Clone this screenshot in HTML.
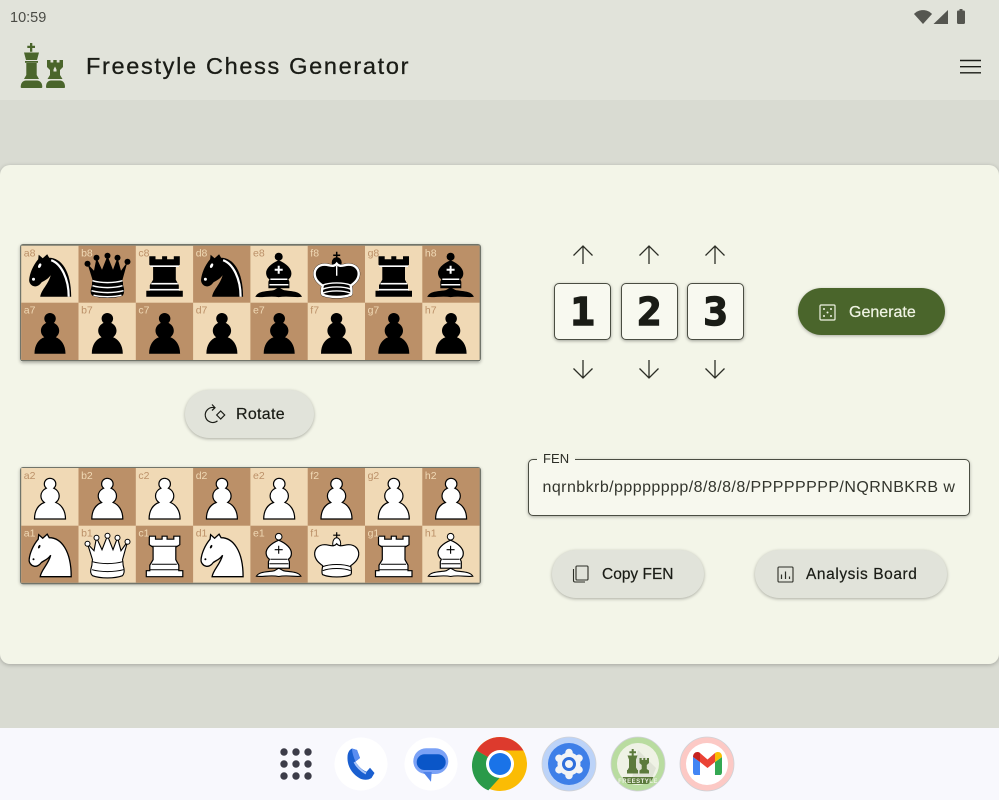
<!DOCTYPE html>
<html><head><meta charset="utf-8"><style>
html,body{margin:0;padding:0;width:999px;height:800px;overflow:hidden;background:#d9dbd2;font-family:"Liberation Sans",sans-serif}
.a{position:absolute}
#top{left:0;top:0;width:999px;height:100px;background:#e1e3da}
#card{left:0;top:165px;width:999px;height:499px;background:#f3f5e8;border-radius:10px;box-shadow:0 1px 4px rgba(0,0,0,.25)}
#nav{left:0;top:728px;width:999px;height:72px;background:#f8f8fd}
.t{white-space:nowrap;line-height:1}
.m{-webkit-text-stroke:.2px currentColor}
.btn{background:#e1e3da;border-radius:24px;box-shadow:0 1px 3px rgba(0,0,0,.3)}
.box{width:55px;height:55px;background:#f8f9f0;border:1px solid #4a4d42;border-radius:5px;box-shadow:0 1px 3px rgba(0,0,0,.35);text-align:center;font:bold 38px/57px "DejaVu Sans Mono","Liberation Mono",monospace;color:#1a1c16;-webkit-text-stroke:1.6px #1a1c16}
.box span{display:inline-block;transform:scaleX(1.06)}
svg{position:absolute;overflow:visible}
.board{box-shadow:0 1px 3px rgba(0,0,0,.3)}
</style></head><body>
<div class="a" id="top"></div>
<div class="a" id="card"></div>
<div class="a" id="nav"></div>

<svg width="0" height="0" style="left:0;top:0"><defs>
<path id="pw" d="M28.700 10.300c-3.100 0-5.600 2.500-5.600 5.600 0 1.700.8 3.300 2 4.300-3.100 1.400-5.400 4.300-5.400 7.700 0 2.700 1.300 5 3.400 6.600C17.500 36.500 13.300 42 13.300 51H44.300C44.300 42 39.800 36.500 34.600 34.500c2.100-1.600 3.400-3.900 3.400-6.600 0-3.400-2.300-6.300-5.400-7.700 1.200-1 2-2.600 2-4.300 0-3.100-2.500-5.600-5.900-5.600z"/>
<path id="kn" d="M19 51C20 44 27 39 29.500 29.500 26 34.500 22 35 20 37 18 40 15 41 13 40.500 10 40 7.500 37 8 33.500 8.500 28 11.500 20 17 13.500L17.500 9 21.500 12.500 26 8.500 28 12C40 12 50 25 50 51Z"/>
<path id="rk" d="M13.500 10.500H19.700V13.500H26.300V10.500H31.300V13.500H38V10.500H44V19L40 21.500V34L43 39.500V45H47V51H10.500V45H14V39.500L17.300 34V21.500L13.500 19Z"/>
<path id="qn" d="M14 34 9 18 15.500 25 18 12 23.500 24 29 10 34.500 24 39 12 42.500 25 49 16 44 34C45 38 44 38 45 41 46.500 46 45 49 44 50 36 53 22 53 14 50 12 48 11.500 46 13 41 14 38 13 38 14 34Z"/>
<path id="kg" d="M29 18C26 22 22 19 17 19 10 19 6.500 24 7 29 7.500 34 11 37 15 40 14 45 14 48 15 49 22 52 36 52 43 49 44 48 44 45 43 40 47 37 50.500 34 51 29 51.500 24 48 19 41 19 36 19 32 22 29 18Z"/>
<path id="bsb" d="M28.300 14.500C20 18 15.500 23 15.700 27.500 16 31 17.500 32.500 19 33.500L18 36V42.500H39V36L38 33.500C39.500 32.500 41 31 41 27.500 41 23 36.500 18 28.300 14.500Z"/>
<path id="bsf" d="M6 50.500C9 45.500 18 46.500 24 45L28.300 42.500 33 45C39 46.500 47.500 45.500 50.500 50.500 45 51.500 37 49 28.300 50.800 20 49 12 51.500 6 50.500Z"/>

<g id="bP"><use href="#pw" fill="#000"/></g>
<g id="wP"><use href="#pw" fill="#fff" stroke="#000" stroke-width="1.200"/></g>
<g id="bN"><use href="#kn" fill="#000"/><path d="M47.500 51C47.500 33 40 18 30 14.500" fill="none" stroke="#fff" stroke-width="2.200"/><ellipse cx="18.500" cy="20" rx="1.400" ry="2.400" fill="#fff" transform="rotate(25 18.500 20)"/><circle cx="12.300" cy="33.500" r="1.500" fill="#fff"/></g>
<g id="wN"><use href="#kn" fill="#fff" stroke="#000" stroke-width="1.300"/><ellipse cx="18" cy="21" rx="1" ry="1.900" fill="#000" transform="rotate(25 18 21)"/><circle cx="12.300" cy="33.500" r="1" fill="#000"/></g>
<g id="bR"><use href="#rk" fill="#000"/><path d="M14.500 20.500H43M15.500 38H42M13.500 44H44" stroke="#fff" stroke-width="1.600" fill="none"/></g>
<g id="wR"><use href="#rk" fill="#fff" stroke="#000" stroke-width="1.200"/><path d="M15 20.500H42M16 38.500H41M14 44H43" stroke="#000" stroke-width="1" fill="none"/></g>
<g id="bQ"><use href="#qn" fill="#000"/><g fill="#000"><circle cx="9" cy="18" r="3"/><circle cx="18" cy="12" r="3"/><circle cx="29" cy="10" r="3"/><circle cx="39" cy="12" r="3"/><circle cx="49" cy="16" r="3"/></g><path d="M14 35C22 37.500 36 37.500 44 35M14 40C22 42.500 36 42.500 44 40M13 45C22 47.500 36 47.500 45 45M15 49.500C22 51.500 36 51.500 43 49.500" fill="none" stroke="#fff" stroke-width="1.500"/></g>
<g id="wQ"><use href="#qn" fill="#fff" stroke="#000" stroke-width="1.100"/><g fill="#fff" stroke="#000" stroke-width="1"><circle cx="9" cy="18" r="2.500"/><circle cx="18" cy="12" r="2.500"/><circle cx="29" cy="10" r="2.500"/><circle cx="39" cy="12" r="2.500"/><circle cx="49" cy="16" r="2.500"/></g><path d="M14 36C22 38.500 36 38.500 44 36M13.500 44C22 46.500 36 46.500 45 44" fill="none" stroke="#000" stroke-width="1"/></g>
<g id="bK"><path d="M29 6V13M25.500 9.500H32.500" stroke="#000" stroke-width="1.500"/><ellipse cx="29" cy="17" rx="5" ry="5.500" fill="#000"/><use href="#kg" fill="#000" stroke="#000" stroke-width="3"/><use href="#kg" fill="#000" stroke="#fff" stroke-width="2.400"/><path d="M29 20 29 30M15 39.500C22 36.500 36 36.500 43 39.500M15 43.500C22 40.500 36 40.500 43 43.500M15 47.500C22 44.500 36 44.500 43 47.500" fill="none" stroke="#fff" stroke-width="1.400"/></g>
<g id="wK"><path d="M29 6.500V13M25.500 9.500H32.500" stroke="#000" stroke-width="1.200"/><ellipse cx="29" cy="18" rx="4" ry="6" fill="#fff" stroke="#000"/><use href="#kg" fill="#fff" stroke="#000" stroke-width="1.200"/><path d="M15 41C22 38 36 38 43 41M15 45C22 42 36 42 43 45" fill="none" stroke="#000" stroke-width="1"/></g>
<g id="bB"><circle cx="28.300" cy="11" r="4" fill="#000"/><use href="#bsb" fill="#000"/><use href="#bsf" fill="#000" stroke="#000" stroke-width="1.400"/><path d="M28.300 20V28M24.300 24H32.300" stroke="#fff" stroke-width="2"/><path d="M20 33.500H37M19 39H38" stroke="#fff" stroke-width="1.500"/></g>
<g id="wB"><circle cx="28.300" cy="11" r="3.300" fill="#fff" stroke="#000"/><use href="#bsb" fill="#fff" stroke="#000" stroke-width="1.200"/><use href="#bsf" fill="#fff" stroke="#000" stroke-width="1.100"/><path d="M28.300 20V28M24.300 24H32.300" stroke="#000" stroke-width="1.100"/><path d="M20 33.500H37M19 38H38" stroke="#000" stroke-width="1"/></g>
</defs></svg>

<!-- status bar -->
<div class="a t" style="left:10px;top:11px;font-size:14.500px;color:#4a4b45">10:59</div>
<svg style="left:912px;top:8px" width="56" height="18" viewBox="0 0 56 18"><path d="M2 6C6.500 .8 15.500 .8 20 6L11 16Z" fill="#555650"/><path d="M36 2V16H21.500Z" fill="#555650"/><rect x="45" y="2.500" width="8" height="13.500" rx="1.200" fill="#555650"/><rect x="47.500" y="1" width="3" height="2" fill="#555650"/></svg>

<!-- logo -->
<svg style="left:0;top:0" width="100" height="100" viewBox="0 0 100 100" fill="#4a652b">
<path d="M30 43h2.300v2.700H35V48h-2.700v3.800H30V48h-2.700v-2.300H30z"/>
<path d="M24 52.500H39L37 60H26Z"/>
<path d="M25 61H38V62.800H25Z"/>
<path d="M26.300 63H36.700V75L39 79H24L26.300 75Z"/>
<path d="M20.700 87C20.700 83 23 80.500 26 80.500H37C40 80.500 42.300 83 42.300 87 42.300 87.700 41.800 88 41 88H22C21.200 88 20.700 87.700 20.700 87Z"/>
<path d="M47 60H50.500V62.500H53.300V60H56.700V62.500H59.500V60H63V67L60 70V75L62.500 79H47.500L50 75V70L47 67Z"/>
<path d="M53.500 69.500 55 66.500 56.500 69.500V71.500H53.500Z" fill="#e1e3da"/>
<path d="M46 87C46 83 48 80.500 51 80.500H60C63 80.500 65 83 65 87 65 87.700 64.500 88 64 88H47C46.500 88 46 87.700 46 87Z"/>
</svg>
<div class="a t" style="left:86px;top:55px;font-size:23.500px;letter-spacing:1.680px;color:#1a1c16;-webkit-text-stroke:.3px #1a1c16">Freestyle Chess Generator</div>
<svg style="left:960px;top:58px" width="21" height="17"><path d="M0 2.500H21M0 8.700H21M0 14.800H21" stroke="#1a1c16" stroke-width="1.400"/></svg>

<!-- top board -->
<svg class="board" style="left:19.500px;top:244px;border-radius:3px" width="461" height="117.500" viewBox="0 0 461 117.500">
<rect width="461" height="117.500" rx="3" fill="#70746a"/>
<g transform="translate(1.200 1.700)">
<rect width="458.400" height="114.300" fill="#f0d9b5"/>
<g fill="#bb9068"><rect x="57.300" width="57.300" height="57"/><rect x="171.900" width="57.300" height="57"/><rect x="286.500" width="57.300" height="57"/><rect x="401.100" width="57.300" height="57"/><rect y="57" width="57.300" height="57.300"/><rect x="114.600" y="57" width="57.300" height="57.300"/><rect x="229.200" y="57" width="57.300" height="57.300"/><rect x="343.800" y="57" width="57.300" height="57.300"/></g>
<use href="#bN"/><use href="#bQ" x="57.300"/><use href="#bR" x="114.600"/><use href="#bN" x="171.900"/><use href="#bB" x="229.200"/><use href="#bK" x="286.500"/><use href="#bR" x="343.800"/><use href="#bB" x="401.100"/>
<use href="#bP" y="57"/><use href="#bP" x="57.300" y="57"/><use href="#bP" x="114.600" y="57"/><use href="#bP" x="171.900" y="57"/><use href="#bP" x="229.200" y="57"/><use href="#bP" x="286.500" y="57"/><use href="#bP" x="343.800" y="57"/><use href="#bP" x="401.100" y="57"/>
<g font-family="Liberation Sans" font-size="10.500">
<g fill="#bb9068"><text x="2.600" y="11">a8</text><text x="117.200" y="11">c8</text><text x="231.800" y="11">e8</text><text x="346.400" y="11">g8</text><text x="59.900" y="68">b7</text><text x="174.500" y="68">d7</text><text x="289.100" y="68">f7</text><text x="403.700" y="68">h7</text></g>
<g fill="#f0d9b5"><text x="59.900" y="11">b8</text><text x="174.500" y="11">d8</text><text x="289.100" y="11">f8</text><text x="403.700" y="11">h8</text><text x="2.600" y="68">a7</text><text x="117.200" y="68">c7</text><text x="231.800" y="68">e7</text><text x="346.400" y="68">g7</text></g>
</g></g></svg>

<!-- bottom board -->
<svg class="board" style="left:19.500px;top:467px;border-radius:3px" width="461" height="117.300" viewBox="0 0 461 117.300">
<rect width="461" height="117.300" rx="3" fill="#70746a"/>
<g transform="translate(1.200 1)">
<rect width="458.400" height="114.700" fill="#f0d9b5"/>
<g fill="#bb9068"><rect x="57.300" width="57.300" height="57.700"/><rect x="171.900" width="57.300" height="57.700"/><rect x="286.500" width="57.300" height="57.700"/><rect x="401.100" width="57.300" height="57.700"/><rect y="57.700" width="57.300" height="57"/><rect x="114.600" y="57.700" width="57.300" height="57"/><rect x="229.200" y="57.700" width="57.300" height="57"/><rect x="343.800" y="57.700" width="57.300" height="57"/></g>
<use href="#wP"/><use href="#wP" x="57.300"/><use href="#wP" x="114.600"/><use href="#wP" x="171.900"/><use href="#wP" x="229.200"/><use href="#wP" x="286.500"/><use href="#wP" x="343.800"/><use href="#wP" x="401.100"/>
<use href="#wN" y="57.700"/><use href="#wQ" x="57.300" y="57.700"/><use href="#wR" x="114.600" y="57.700"/><use href="#wN" x="171.900" y="57.700"/><use href="#wB" x="229.200" y="57.700"/><use href="#wK" x="286.500" y="57.700"/><use href="#wR" x="343.800" y="57.700"/><use href="#wB" x="401.100" y="57.700"/>
<g font-family="Liberation Sans" font-size="10.500">
<g fill="#bb9068"><text x="2.600" y="11">a2</text><text x="117.200" y="11">c2</text><text x="231.800" y="11">e2</text><text x="346.400" y="11">g2</text><text x="59.900" y="68.700">b1</text><text x="174.500" y="68.700">d1</text><text x="289.100" y="68.700">f1</text><text x="403.700" y="68.700">h1</text></g>
<g fill="#f0d9b5"><text x="59.900" y="11">b2</text><text x="174.500" y="11">d2</text><text x="289.100" y="11">f2</text><text x="403.700" y="11">h2</text><text x="2.600" y="68.700">a1</text><text x="117.200" y="68.700">c1</text><text x="231.800" y="68.700">e1</text><text x="346.400" y="68.700">g1</text></g>
</g></g></svg>

<!-- rotate -->
<div class="a btn" style="left:185px;top:390px;width:129px;height:48px"></div>
<svg style="left:204px;top:403px" width="22" height="22" fill="none" stroke="#1a1c16" stroke-width="1.200"><path d="M10.500 4.700A7.500 7.500 0 1 0 13.500 17.800"/><path d="M8 1.500 11 4.700 8 7.500"/><path d="M16.700 8 20.700 12 16.700 16 12.700 12Z"/></svg>
<div class="a t m" style="left:236px;top:407px;font-size:16px;letter-spacing:.3px;color:#1a1c16">Rotate</div>

<!-- arrows -->
<svg style="left:570px;top:243px" width="160" height="137" fill="none" stroke="#2c2e26" stroke-width="1.300">
<path d="M13 3V21M3.500 12.500 13 3 22.500 12.500"/><path d="M13 117V135M3.500 125.500 13 135 22.500 125.500"/>
<g transform="translate(66 0)"><path d="M13 3V21M3.500 12.500 13 3 22.500 12.500"/><path d="M13 117V135M3.500 125.500 13 135 22.500 125.500"/></g>
<g transform="translate(132 0)"><path d="M13 3V21M3.500 12.500 13 3 22.500 12.500"/><path d="M13 117V135M3.500 125.500 13 135 22.500 125.500"/></g>
</svg>
<div class="a box" style="left:554px;top:283px"><span>1</span></div>
<div class="a box" style="left:620.500px;top:283px"><span>2</span></div>
<div class="a box" style="left:687px;top:283px"><span>3</span></div>

<!-- generate -->
<div class="a btn" style="left:798px;top:288px;width:147px;height:47px;background:#4a652b"></div>
<svg style="left:819px;top:304px" width="17" height="17" fill="#f0f4e4"><rect x="1" y="1" width="15" height="15" rx="1" fill="none" stroke="#f0f4e4" stroke-width="1.200"/><circle cx="5" cy="5" r="1"/><circle cx="12" cy="5" r="1"/><circle cx="8.500" cy="8.500" r="1"/><circle cx="5" cy="12" r="1"/><circle cx="12" cy="12" r="1"/></svg>
<div class="a t m" style="left:849px;top:305px;font-size:16px;color:#f0f4e4">Generate</div>

<!-- FEN -->
<div class="a" style="left:528px;top:459px;width:440px;height:55px;background:#f7f8ee;border:1px solid #4a4d42;border-radius:5px;box-shadow:0 1px 3px rgba(0,0,0,.3)"></div>
<div class="a t" style="left:537px;top:452px;padding:0 6px;background:linear-gradient(#f3f5e8 50%,#f7f8ee 50%);font-size:13px;letter-spacing:.1px;color:#2c2e26;height:14px">FEN</div>
<div class="a t" style="left:542.500px;top:480px;font-size:16px;letter-spacing:.44px;color:#33352d">nqrnbkrb/pppppppp/8/8/8/8/PPPPPPPP/NQRNBKRB w</div>

<!-- copy -->
<div class="a btn" style="left:551.500px;top:550px;width:152px;height:48px"></div>
<svg style="left:572px;top:565px" width="18" height="18" fill="none" stroke="#2c2e26" stroke-width="1.100"><rect x="4" y="1" width="12" height="14" rx="1"/><path d="M1.500 4V15.500C1.500 16.500 2 17 3 17H13"/></svg>
<div class="a t m" style="left:602px;top:567px;font-size:15.500px;color:#1a1c16">Copy FEN</div>

<!-- analysis -->
<div class="a btn" style="left:755px;top:550px;width:192px;height:48px"></div>
<svg style="left:777px;top:566px" width="17" height="17" fill="none" stroke="#2c2e26" stroke-width="1.100"><rect x="1" y="1" width="15" height="15" rx="1"/><path d="M4.500 8.500V13M8.500 5.500V13M12.500 10.500V13" stroke-width="1.200"/></svg>
<div class="a t m" style="left:806px;top:567px;font-size:15.500px;letter-spacing:.58px;color:#1a1c16">Analysis Board</div>

<!-- dock -->
<svg style="left:0;top:728px" width="999" height="72" viewBox="0 728 999 72">
<g fill="#3c3c48"><circle cx="284" cy="752" r="3.700"/><circle cx="296" cy="752" r="3.700"/><circle cx="308" cy="752" r="3.700"/><circle cx="284" cy="764" r="3.700"/><circle cx="296" cy="764" r="3.700"/><circle cx="308" cy="764" r="3.700"/><circle cx="284" cy="776" r="3.700"/><circle cx="296" cy="776" r="3.700"/><circle cx="308" cy="776" r="3.700"/></g>

<circle cx="361" cy="764" r="26.500" fill="#fff"/>
<path d="M352 748.500 357 750 360 758 355.500 761.500C357.500 765.500 362 770 366.500 771.800L370 767.700 374.500 773 371.500 778C368 780.500 363 780 360 778.500 352 774 347 766 347.500 757 347.500 753 349 750 352 748.500Z" fill="#1a5fd0"/>
<path d="M352 748.500 357 750 360 758 355.500 761.500C353.500 757 352 752 352 748.500Z" fill="#5b8df0"/>
<path d="M354.500 762C356.500 766 361 771 366 773.500" fill="none" stroke="#a8c4f8" stroke-width="2"/>

<circle cx="431" cy="764" r="26.500" fill="#fff"/>
<rect x="413.300" y="748.300" width="35" height="25.700" rx="12.800" fill="#7ba2f6"/>
<path d="M423 772 431 781.700 431.700 772Z" fill="#4f83ea"/>
<rect x="416.700" y="754.300" width="29" height="15.700" rx="7.800" fill="#0a56c8"/>

<circle cx="500" cy="764" r="27" fill="#fbbc04"/>
<path d="M500 737A27 27 0 0 1 523.400 750.500H500A13.500 13.500 0 0 0 488.300 757.300L476.600 750.500A27 27 0 0 1 500 737Z" fill="#dd3a2d"/>
<path d="M476.600 750.500 488.300 757.300A13.500 13.500 0 0 0 500 777.500L488.300 790.400A27 27 0 0 1 476.600 750.500Z" fill="#2a9a49"/>
<circle cx="500" cy="764" r="14" fill="#fff"/><circle cx="500" cy="764" r="11" fill="#1a73e8"/>

<circle cx="569" cy="764" r="27" fill="#bcd3f8" stroke="#d0d2d6" stroke-width=".8"/>
<circle cx="569" cy="764" r="21" fill="#3e7fe8"/>
<circle cx="569" cy="764" r="11.500" fill="#f3f4f6"/>
<g stroke="#f3f4f6" stroke-width="7.500" stroke-linecap="round"><path d="M569 752.500V775.500"/><path d="M559 758.200 579 769.800"/><path d="M559 769.800 579 758.200"/></g>
<circle cx="569" cy="764" r="5.500" fill="#f3f4f6" stroke="#2f6fdc" stroke-width="3"/>

<circle cx="638" cy="764" r="27" fill="#b9dca0" stroke="#d0d2d6" stroke-width=".8"/>
<circle cx="638" cy="764" r="21" fill="#eff2e5"/>
<path d="M638 750 656 768 652 778H632Z" fill="#e0e3d6"/>
<g fill="#5c7a3c"><path d="M631.700 749h2v2.200h2.300v2h-2.300v2.300H637.500l-1.500 4v8l2 3.500H627l2-3.500v-8l-1.500-4h4.200v-2.300h-2.300v-2h2.300z"/><path d="M627 770h11v3.500h-11z"/><path d="M639.500 758h2.200v2h1.600v-2h2v2h1.600v-2h2.100v5l-2.200 2v4l2.200 1.500v3h-9.500v-3l2.200-1.500v-4l-2.200-2z"/><path d="M622.500 777h31a21 21 0 0 1-5.500 7h-20a21 21 0 0 1-5.500-7z"/></g>
<text x="638" y="783" font-size="6" font-weight="bold" text-anchor="middle" letter-spacing=".5" fill="#eff2e5" font-family="Liberation Sans">FREESTYLE</text>

<circle cx="707" cy="764" r="27" fill="#fcc9c5" stroke="#d0d2d6" stroke-width=".8"/>
<circle cx="707" cy="764" r="21" fill="#fff"/>
<path d="M693 757V772C693 774 694 775 695 775H700V762Z" fill="#4285f4"/>
<path d="M715 762V775H720C721 775 722 774 722 772V757Z" fill="#34a853"/>
<path d="M700 753 707.500 759.500 715 753V762L707.500 768 700 762Z" fill="#ea4335"/>
<path d="M693 757C693 752 698 751 700 753V762Z" fill="#c5221f"/>
<path d="M715 753C718 751 722 752 722 757L715 762Z" fill="#fbbc04"/>
</svg>
</body></html>
